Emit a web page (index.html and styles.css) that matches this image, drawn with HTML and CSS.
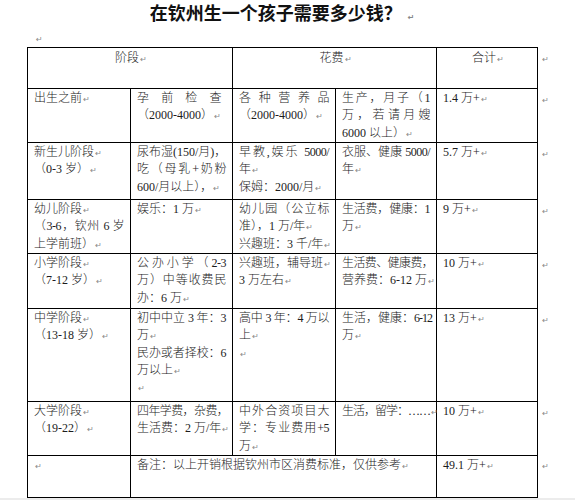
FILE: index.html
```html
<!DOCTYPE html>
<html lang="zh-CN">
<head>
<meta charset="utf-8">
<title>在钦州生一个孩子需要多少钱？</title>
<link rel="stylesheet" href="styles.css">
</head>
<body>
<div class="page">
  <h1 class="title">在钦州生一个孩子需要多少钱？<span class="pm">↵</span></h1>
  <p class="blank"><span class="pm">↵</span></p>
  <table class="grid">
    <colgroup>
      <col class="c1"><col class="c2"><col class="c3"><col class="c4"><col class="c5"><col class="c6">
    </colgroup>
    <tr class="r0">
      <td colspan="2" class="ctr">阶段<span class="pm">↵</span></td>
      <td colspan="2" class="ctr">花费<span class="pm">↵</span></td>
      <td class="ctr">合计<span class="pm">↵</span></td>
      <td class="end"><span class="pm">↵</span></td>
    </tr>
    <tr class="r1">
      <td><div class="ln">出生之前<span class="pm">↵</span></div></td>
      <td><div class="ln j jr">孕前检查</div><div class="ln">（2000-4000）<span class="pm">↵</span></div></td>
      <td><div class="ln j">各种营养品</div><div class="ln">（2000-4000）<span class="pm">↵</span></div></td>
      <td><div class="ln j">生产，月子（1</div><div class="ln j">万，若请月嫂</div><div class="ln">6000 以上）<span class="pm">↵</span></div></td>
      <td><div class="ln">1.4 万+<span class="pm">↵</span></div></td>
      <td class="end"><span class="pm">↵</span></td>
    </tr>
    <tr class="r2">
      <td><div class="ln">新生儿阶段<span class="pm">↵</span></div><div class="ln">（0-3 岁）<span class="pm">↵</span></div></td>
      <td><div class="ln">尿布湿(150/月)，</div><div class="ln j">吃（母乳+奶粉</div><div class="ln">600/月以上），<span class="pm">↵</span></div></td>
      <td><div class="ln j">早教,娱乐 5000/</div><div class="ln">年<span class="pm">↵</span></div><div class="ln">保姆：2000/月<span class="pm">↵</span></div></td>
      <td><div class="ln j">衣服、健康 5000/</div><div class="ln">年<span class="pm">↵</span></div></td>
      <td><div class="ln">5.7 万+<span class="pm">↵</span></div></td>
      <td class="end"><span class="pm">↵</span></td>
    </tr>
    <tr class="r3">
      <td><div class="ln">幼儿阶段<span class="pm">↵</span></div><div class="ln j">（3-6，钦州 6 岁</div><div class="ln">上学前班）<span class="pm">↵</span></div></td>
      <td><div class="ln">娱乐：1 万<span class="pm">↵</span></div></td>
      <td><div class="ln j">幼儿园（公立标</div><div class="ln">准），1 万/年<span class="pm">↵</span></div><div class="ln">兴趣班：3 千/年<span class="pm">↵</span></div></td>
      <td><div class="ln j">生活费，健康：1</div><div class="ln">万<span class="pm">↵</span></div></td>
      <td><div class="ln">9 万+<span class="pm">↵</span></div></td>
      <td class="end"><span class="pm">↵</span></td>
    </tr>
    <tr class="r4">
      <td><div class="ln">小学阶段<span class="pm">↵</span></div><div class="ln">（7-12 岁）<span class="pm">↵</span></div></td>
      <td><div class="ln j">公办小学（2-3</div><div class="ln j">万）中等收费民</div><div class="ln">办：6 万<span class="pm">↵</span></div></td>
      <td><div class="ln">兴趣班，辅导班<span class="pm">↵</span></div><div class="ln">3 万左右<span class="pm">↵</span></div></td>
      <td><div class="ln t">生活费、健康费，</div><div class="ln">营养费：6-12 万<span class="pm">↵</span></div></td>
      <td><div class="ln">10 万+<span class="pm">↵</span></div></td>
      <td class="end"><span class="pm">↵</span></td>
    </tr>
    <tr class="r5">
      <td><div class="ln">中学阶段<span class="pm">↵</span></div><div class="ln">（13-18 岁）<span class="pm">↵</span></div></td>
      <td><div class="ln j">初中中立 3 年：3</div><div class="ln">万<span class="pm">↵</span></div><div class="ln j">民办或者择校：6</div><div class="ln">万以上<span class="pm">↵</span></div><div class="ln"><span class="pm">↵</span></div></td>
      <td><div class="ln j">高中 3 年：4 万以</div><div class="ln">上<span class="pm">↵</span></div><div class="ln"><span class="pm">↵</span></div></td>
      <td><div class="ln j jt">生活，健康：6-12</div><div class="ln">万<span class="pm">↵</span></div></td>
      <td><div class="ln">13 万+<span class="pm">↵</span></div></td>
      <td class="end"><span class="pm">↵</span></td>
    </tr>
    <tr class="r6">
      <td><div class="ln">大学阶段<span class="pm">↵</span></div><div class="ln">（19-22）<span class="pm">↵</span></div></td>
      <td><div class="ln t">四年学费，杂费，</div><div class="ln">生活费：2 万/年<span class="pm">↵</span></div></td>
      <td><div class="ln j">中外合资项目大</div><div class="ln j">学：专业费用+5</div><div class="ln">万<span class="pm">↵</span></div></td>
      <td><div class="ln tt">生活，留学：……<span class="pm">↵</span></div></td>
      <td><div class="ln">10 万+<span class="pm">↵</span></div></td>
      <td class="end"><span class="pm">↵</span></td>
    </tr>
    <tr class="r7">
      <td><div class="ln"><span class="pm">↵</span></div></td>
      <td colspan="3"><div class="ln">备注：以上开销根据钦州市区消费标准，仅供参考<span class="pm">↵</span></div></td>
      <td><div class="ln">49.1 万+<span class="pm">↵</span></div></td>
      <td class="end"><span class="pm">↵</span></td>
    </tr>
  </table>
</div>
</body>
</html>
```

FILE: styles.css
```css
html, body {
  margin: 0;
  padding: 0;
}
body {
  background: #ececec;
  font-family: "Liberation Serif", "Noto Sans CJK SC", serif;
  color: #1c1c1c;
}
.page {
  background: #fff;
  height: 498px;
  overflow: hidden;
}
.title {
  margin: 0 0 0 27px;
  width: 510px;
  height: 26px;
  text-align: center;
  font: 700 18px/24px "Noto Sans CJK SC", sans-serif;
  color: #111;
}
.title .pm {
  margin-left: 6px;
}
.blank {
  margin: 0;
  height: 21px;
  padding-left: 35px;
  line-height: 21px;
}
.grid {
  border-collapse: collapse;
  table-layout: fixed;
  margin-left: 27px;
  width: 534px;
  font-size: 12px;
  line-height: 17.3px;
}
.c1 { width: 103px; }
.c2 { width: 102px; }
.c3 { width: 103px; }
.c4 { width: 101px; }
.c5 { width: 101px; }
.c6 { width: 24px; }
.r0 { height: 41px; }
.r1 { height: 54px; }
.r2 { height: 57px; }
.r3 { height: 54px; }
.r4 { height: 55px; }
.r5 { height: 93px; }
.r6 { height: 53px; }
.r7 { height: 42px; }
td {
  border: 1px solid #000;
  vertical-align: top;
  padding: 1px 4px 0 6px;
  font-weight: 300;
}
td.ctr {
  text-align: center;
  padding-top: 2px;
}
td.end {
  border: none;
  padding: 2px 0 0 3px;
}
.ln {
  white-space: nowrap;
  text-align: left;
  height: 17.3px;
}
.ln.j {
  white-space: normal;
  letter-spacing: -0.5px;
  text-align: justify;
  text-align-last: justify;
  padding-right: 2px;
}
.ln.jr {
  margin-right: 5px;
}
.ln.jt {
  letter-spacing: -1px;
  padding-right: 0;
}
.ln.t {
  letter-spacing: -0.6px;
}
.ln.tt {
  letter-spacing: -1px;
}
.pm {
  font-family: "DejaVu Sans", sans-serif;
  font-size: 8px;
  line-height: 0;
  color: #888;
  margin-left: 1px;
  letter-spacing: 0;
}
```
